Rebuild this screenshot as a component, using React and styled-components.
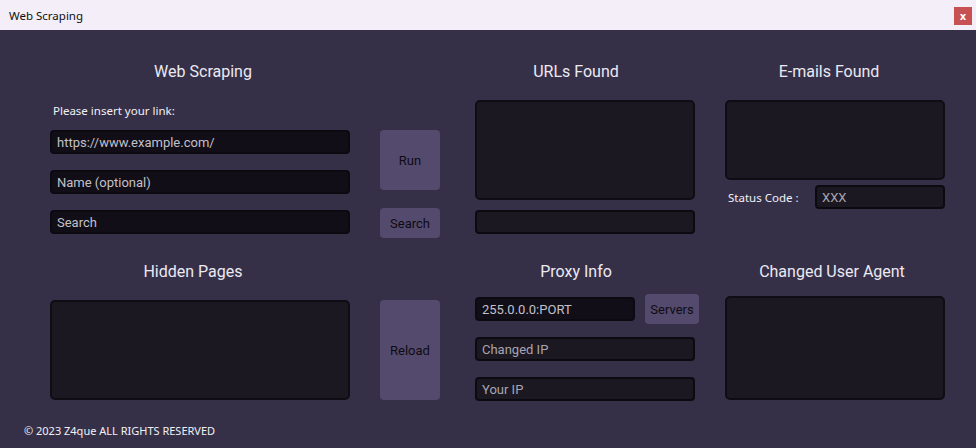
import React from "react";
import styled, { createGlobalStyle } from "styled-components";

const GlobalStyle = createGlobalStyle`
  html, body {
    margin: 0;
    padding: 0;
    background: #353048;
  }
  * {
    box-sizing: border-box;
  }
`;

const App = () => {
  return (
    <Window>
      <GlobalStyle />
      <TitleBar>
        <TitleText>Web Scraping</TitleText>
        <CloseButton>x</CloseButton>
      </TitleBar>

      <Band height={220} top={32}>
        <Column width={300}>
          <Heading shift={3}>Web Scraping</Heading>
          <Label>Please insert your link:</Label>
          <InputStack gap={16} top={12}>
            <Input strong>https://www.example.com/</Input>
            <Input strong>Name (optional)</Input>
            <Input strong>Search</Input>
          </InputStack>
        </Column>

        <Column width={60} left={30}>
          <Button height={60} top={68}>Run</Button>
          <Button height={30} top={18}>Search</Button>
        </Column>

        <Column width={220} left={35}>
          <Heading shift={-9}>URLs Found</Heading>
          <Box height={100} top={18} />
          <Input top={10} />
        </Column>

        <Column width={220} left={30}>
          <Heading shift={-6}>E-mails Found</Heading>
          <Box height={80} top={18} />
          <StatusRow>
            <StatusLabel>Status Code :</StatusLabel>
            <Input width={130}>XXX</Input>
          </StatusRow>
        </Column>
      </Band>

      <Band height={160} top={12}>
        <Column width={300}>
          <Heading shift={-7}>Hidden Pages</Heading>
          <Box height={100} top={18} />
        </Column>

        <Column width={60} left={30}>
          <Button height={100} top={38}>Reload</Button>
        </Column>

        <Column width={220} left={35}>
          <Heading shift={-9}>Proxy Info</Heading>
          <ProxyRow>
            <Input width={160} strong>255.0.0.0:PORT</Input>
            <Button height={30} width={54}>Servers</Button>
          </ProxyRow>
          <Input top={13}>Changed IP</Input>
          <Input top={16}>Your IP</Input>
        </Column>

        <Column width={220} left={30}>
          <Heading shift={-3}>Changed User Agent</Heading>
          <Box height={104} top={14} />
        </Column>
      </Band>

      <Footer>© 2023 Z4que ALL RIGHTS RESERVED</Footer>
    </Window>
  );
};

const Window = styled.div`
  width: 976px;
  height: 448px;
  background: #353048;
  overflow: hidden;
  font-family: Roboto, "Liberation Sans", sans-serif;
`;

const TitleBar = styled.div`
  height: 30px;
  background: #f3eef7;
  display: flex;
  align-items: center;
  justify-content: space-between;
  padding: 0 4px 0 9px;
`;

const TitleText = styled.span`
  font-family: "Noto Sans", "Open Sans", sans-serif;
  font-size: 11.5px;
  color: #111;
`;

const CloseButton = styled.div`
  width: 18px;
  height: 18px;
  margin-top: 2px;
  background: #c75152;
  color: #fff;
  font-family: "DejaVu Sans", sans-serif;
  font-size: 10px;
  font-weight: bold;
  display: flex;
  align-items: center;
  justify-content: center;
`;

const Band = styled.div`
  height: ${(p) => p.height}px;
  padding: ${(p) => p.top}px 0 0 50px;
  display: flex;
  align-items: flex-start;
`;

const Column = styled.div`
  width: ${(p) => p.width}px;
  margin-left: ${(p) => p.left || 0}px;
  display: flex;
  flex-direction: column;
`;

const Heading = styled.div`
  height: 20px;
  line-height: 20px;
  font-size: 16px;
  color: #ece9f2;
  text-align: center;
  transform: translateX(${(p) => p.shift || 0}px);
  white-space: nowrap;
`;

const Label = styled.div`
  margin: 22px 0 0 3px;
  height: 14px;
  line-height: 14px;
  font-family: "Noto Sans", "Open Sans", sans-serif;
  font-size: 11.5px;
  color: #f2f0f5;
`;

const InputStack = styled.div`
  margin-top: ${(p) => p.top}px;
  display: flex;
  flex-direction: column;
  gap: ${(p) => p.gap}px;
`;

const Input = styled.div`
  width: ${(p) => (p.width ? `${p.width}px` : "100%")};
  height: 24px;
  margin-top: ${(p) => p.top || 0}px;
  flex-shrink: 0;
  background: ${(p) => (p.strong ? "#110e17" : "#1b1822")};
  border: 2px solid #0c0a11;
  border-radius: 4px;
  padding: 0 5px;
  display: flex;
  align-items: center;
  font-size: 13px;
  color: ${(p) => (p.strong ? "#c3c0ca" : "#a9a5b0")};
  white-space: nowrap;
`;

const Box = styled.div`
  height: ${(p) => p.height}px;
  margin-top: ${(p) => p.top}px;
  background: #1b1822;
  border: 2px solid #0f0d14;
  border-radius: 5px;
`;

const Button = styled.div`
  width: ${(p) => (p.width ? `${p.width}px` : "100%")};
  height: ${(p) => p.height}px;
  margin-top: ${(p) => p.top || 0}px;
  flex-shrink: 0;
  background: #544a6e;
  border-radius: 4px;
  display: flex;
  align-items: center;
  justify-content: center;
  font-size: 13px;
  color: #0e0c12;
`;

const StatusRow = styled.div`
  margin-top: 5px;
  display: flex;
  align-items: center;
  justify-content: space-between;
`;

const StatusLabel = styled.span`
  margin-left: 3px;
  font-family: "Noto Sans", "Open Sans", sans-serif;
  font-size: 11.5px;
  color: #f2f0f5;
`;

const ProxyRow = styled.div`
  margin-top: 12px;
  width: 224px;
  display: flex;
  align-items: center;
  justify-content: space-between;
`;

const Footer = styled.div`
  margin: 14px 0 0 24px;
  line-height: 14px;
  font-family: "Noto Sans", "Open Sans", sans-serif;
  font-size: 11px;
  color: #f2f0f5;
`;

export default App;
